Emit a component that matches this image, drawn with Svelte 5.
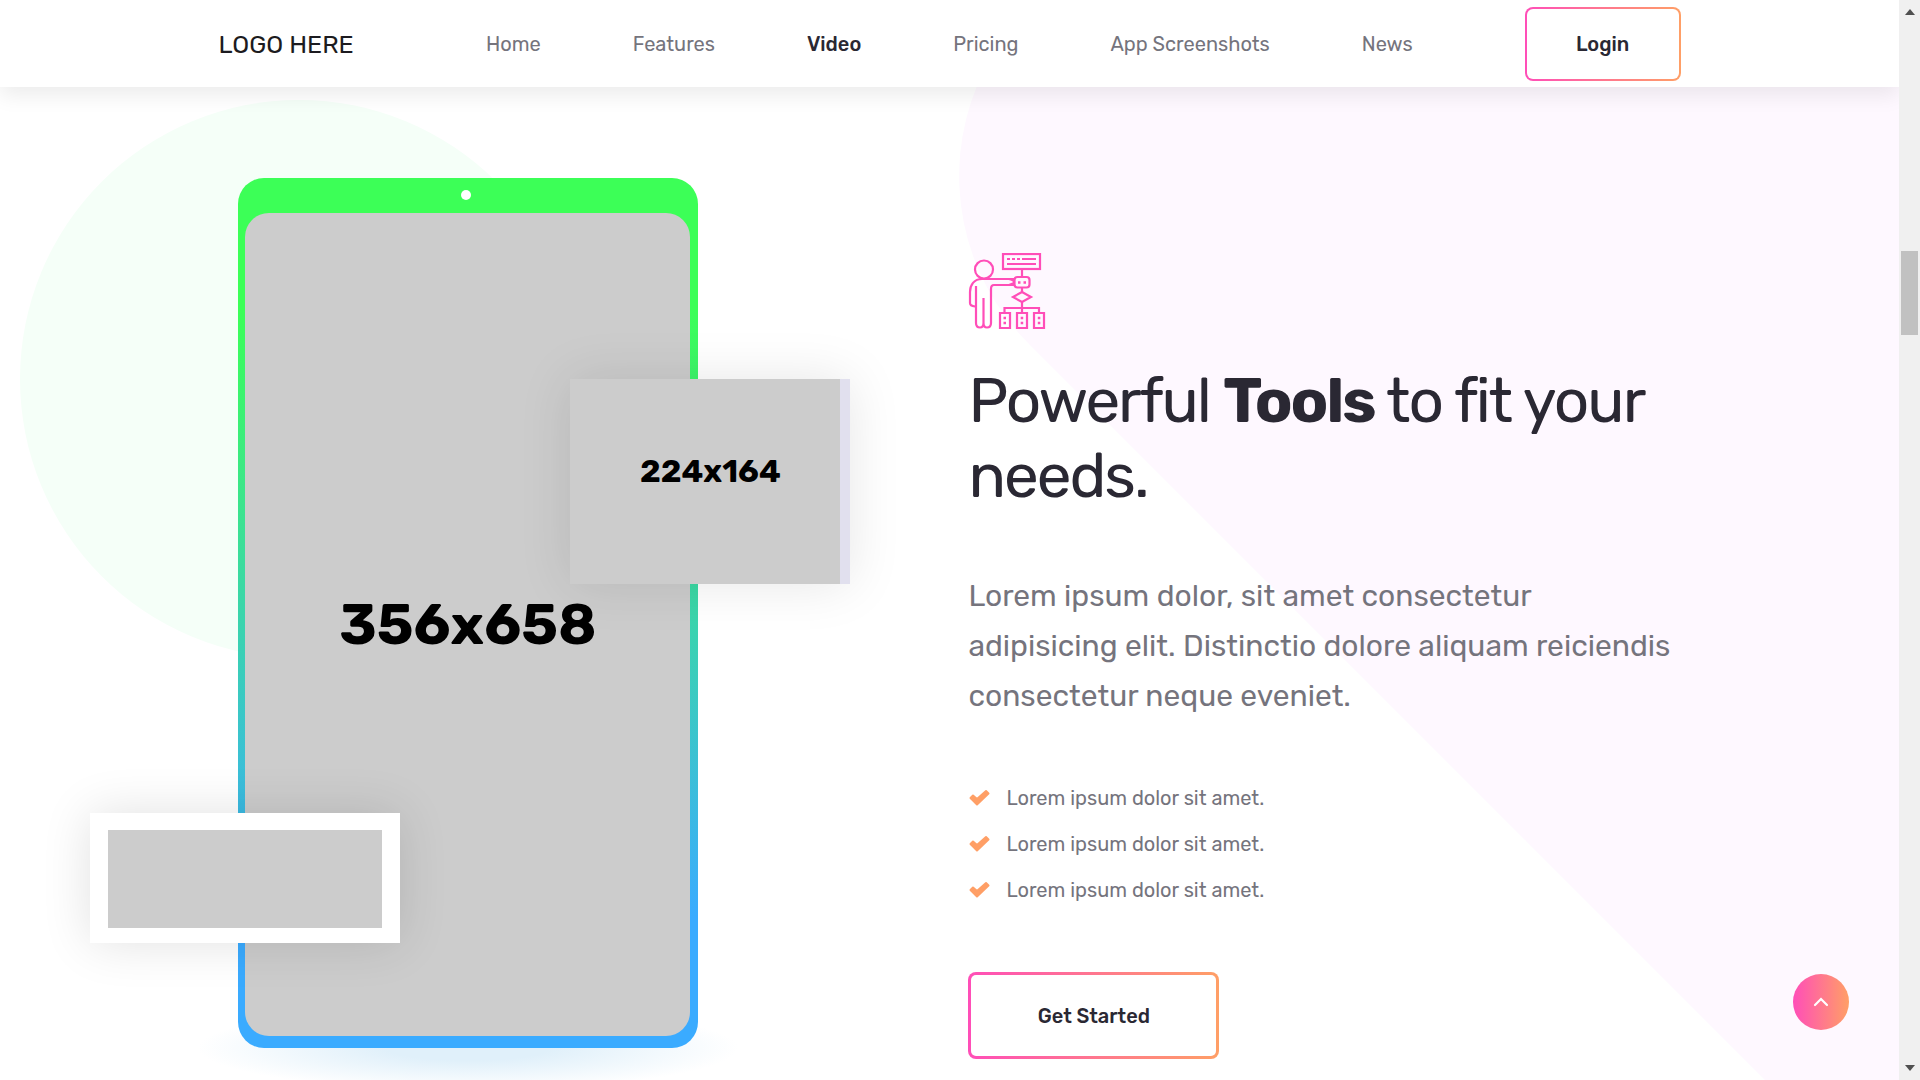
<script>
  const links = ['Home', 'Features', 'Video', 'Pricing', 'App Screenshots', 'News'];
  const current = 'Video';
  const points = [1, 2, 3];
</script>

<div class="window">
  <div class="page">
    <header>
      <div class="container bar">
        <a class="logo" href="#top">LOGO HERE</a>
        <nav>
          {#each links as link}
            <a href="#{link}" class:active={link === current}>{link}</a>
          {/each}
        </nav>
        <button class="outline login" type="button">Login</button>
      </div>
    </header>

    <main>
      <div class="circle"></div>
      <svg class="blob" viewBox="0 0 939 1080" aria-hidden="true">
        <path d="M939 -300H237V-61A237 237 0 0 0 69 344L939 1214Z" fill="#fef8ff" />
      </svg>

      <div class="container columns">
        <div class="art">
          <div class="phone">
            <div class="camera"></div>
            <div class="screen">356x658</div>
            <div class="tile"><span>224x164</span></div>
            <div class="card"><div></div></div>
          </div>
        </div>

        <section>
          <svg class="tools" viewBox="0 0 78 78" fill="none" stroke="#ff4eb8" stroke-width="2.2" aria-hidden="true">
            <circle cx="16" cy="16.500" r="9" />
            <path d="M46 26H14C6 26 2 32 2 39V50Q2 53 7 53.500M46 32H26Q23 32 23 36V70Q23 74.500 19 74.500Q15.500 74.500 15.500 70V45V70Q15.500 74.500 12 74.500Q8 74.500 8 70V33" />
            <path d="M41 26Q46 27.500 46 29Q46 30.500 41 32" />
            <rect x="35" y="1" width="37" height="15" />
            <path d="M39 6H42M44 6H47M49 6H52M54 6H68M39 11H68" stroke-width="2" />
            <path d="M54 16V24M54 35V39M54 49V60M36.500 60V55H71V60" />
            <rect x="46.500" y="24" width="15" height="10.500" rx="3" />
            <path d="M50 29.500H52.500M55.500 29.500H58M35.500 65H38M35.500 70H38M52.700 65H55.200M52.700 70H55.200M69.800 65H72.300M69.800 70H72.300" stroke-width="2.500" />
            <path d="M54 39L63 44L54 49L45 44Z" />
            <path d="M32 60H42V75H32ZM49 60H59V75H49ZM66 60H76V75H66Z" />
          </svg>
          <h1>Powerful <strong>Tools</strong> to fit your needs.</h1>
          <p>Lorem ipsum dolor, sit amet consectetur adipisicing elit. Distinctio dolore aliquam reiciendis consectetur neque eveniet.</p>
          <ul>
            {#each points as point (point)}
              <li>
                <svg viewBox="0 0 22 18" fill="#ff9f66" stroke="#ff9f66" stroke-width="2" stroke-linejoin="round" aria-hidden="true">
                  <path d="M5 6.500L9 10L18 2L20.500 4.500L9 15.500L2.500 9Z" />
                </svg>
                Lorem ipsum dolor sit amet.
              </li>
            {/each}
          </ul>
          <button class="outline start" type="button">Get Started</button>
        </section>
      </div>

      <button class="to-top" type="button" aria-label="Back to top">
        <svg viewBox="0 0 16 10" fill="none" stroke="#fff" stroke-width="2.200" stroke-linecap="round"><path d="M2 8L8 2L14 8" /></svg>
      </button>
    </main>
  </div>

  <div class="scrollbar" aria-hidden="true">
    <svg viewBox="0 0 10 6"><path d="M0 6L5 0L10 6Z" fill="#505050" /></svg>
    <div class="track"><div class="thumb"></div></div>
    <svg viewBox="0 0 10 6"><path d="M0 0L5 6L10 0Z" fill="#505050" /></svg>
  </div>
</div>

<style>
  :global(body) { margin: 0; }
  * { box-sizing: border-box; }
  .window {
    display: grid;
    grid-template-columns: 1fr 21px;
    height: 100vh;
    overflow: hidden;
    font-family: Rubik, Roboto, "Liberation Sans", sans-serif;
    font-size: 20px;
    color: #75747d;
    background: #fff;
  }
  .page { position: relative; display: flex; flex-direction: column; min-width: 0; overflow: hidden; }
  .container { width: 77%; margin: 0 auto; }
  header {
    position: relative;
    z-index: 2;
    flex: none;
    background: #fff;
    box-shadow: 0 8px 20px rgba(0, 0, 0, 0.08);
  }
  .bar { display: flex; align-items: center; padding: 7px 0 6px; }
  .logo { font-size: 25px; color: #1c1b20; text-decoration: none; }
  nav { display: flex; gap: 92px; margin: 0 112px 0 auto; }
  nav a { color: inherit; text-decoration: none; }
  nav .active { color: #2a2833; font-weight: 500; }
  .outline {
    border: 3px solid transparent;
    border-radius: 8px;
    background: linear-gradient(#fff, #fff) padding-box, linear-gradient(90deg, #ff4eb8, #ff9f66) border-box;
    font: inherit;
    font-weight: 500;
    color: #2a2833;
  }
  .login { width: 156px; height: 74px; border-width: 2px; }
  .start { width: 251px; height: 87px; }
  main { position: relative; flex: 1; min-height: 0; }
  .circle {
    position: absolute;
    left: 20px;
    top: 13px;
    width: 558px;
    height: 558px;
    border-radius: 50%;
    background: #f5fff8;
  }
  .blob { position: absolute; right: 0; top: -87px; width: 939px; height: 1080px; overflow: visible; }
  .columns { position: relative; display: grid; grid-template-columns: 750px 1fr; }
  .art { isolation: isolate; padding: 91px 20px 0; }
  .phone {
    position: relative;
    width: 460px;
    height: 870px;
    padding: 35px 8px 12px 7px;
    border-radius: 26px;
    background: linear-gradient(#3cff57 15%, #3aabff 85%);
  }
  .art::after {
    content: "";
    display: block;
    position: relative;
    z-index: -1;
    width: 540px;
    height: 84px;
    margin: -42px -40px 0;
    background: radial-gradient(closest-side, #e0f0fa 30%, #fff);
  }
  .camera {
    position: absolute;
    left: 223px;
    top: 12px;
    width: 10px;
    height: 10px;
    border-radius: 50%;
    background: #fff;
  }
  .screen {
    display: flex;
    align-items: center;
    justify-content: center;
    height: 100%;
    border-radius: 24px;
    background: #ccc;
    font-size: 57px;
    font-weight: 700;
    color: #000;
  }
  .tile {
    position: absolute;
    left: 332px;
    top: 201px;
    display: flex;
    justify-content: center;
    width: 280px;
    height: 205px;
    padding: 73px 0 0 10px;
    border-right: 10px solid #e1e0ee;
    background: #ccc;
    box-shadow: 0 0 50px rgba(0, 0, 0, 0.1);
    font-size: 32px;
    font-weight: 700;
    color: #000;
  }
  .card {
    position: absolute;
    left: -148px;
    top: 635px;
    width: 310px;
    height: 130px;
    padding: 17px 18px 15px;
    background: #fff;
    box-shadow: 0 0 50px rgba(0, 0, 0, 0.12);
  }
  .card div { height: 100%; background: #ccc; }
  section { padding-top: 166px; }
  .tools { display: block; width: 78px; height: 78px; }
  h1 { margin: 33px 0 0; font-size: 62px; line-height: 75px; font-weight: 400; letter-spacing: -2px; color: #2a2833; }
  h1 strong { font-weight: 700; }
  p { margin: 57px 0 0; font-size: 30px; line-height: 50px; }
  ul { margin: 54px 0 0; padding: 0; list-style: none; }
  li { display: flex; align-items: center; gap: 16px; height: 46px; }
  li svg { width: 22px; height: 18px; }
  .start { display: block; margin-top: 59px; }
  .to-top {
    position: absolute;
    right: 50px;
    bottom: 50px;
    display: grid;
    place-items: center;
    width: 56px;
    height: 56px;
    padding: 0;
    border: 0;
    border-radius: 50%;
    background: linear-gradient(90deg, #ff4eb8, #ff9f66);
  }
  .to-top svg { width: 16px; height: 10px; }
  .scrollbar { display: flex; flex-direction: column; align-items: center; padding: 9px 0; background: #f0f0f0; }
  .scrollbar svg { width: 10px; height: 6px; }
  .track { flex: 1; padding-top: 236px; }
  .thumb { width: 17px; height: 84px; background: #c1c1c1; }
</style>
